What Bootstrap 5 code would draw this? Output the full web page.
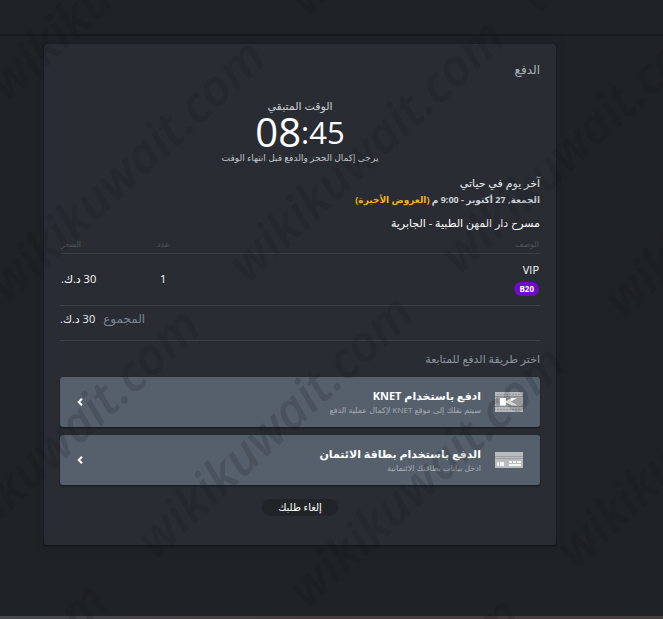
<!DOCTYPE html>
<html lang="ar" dir="rtl">
<head>
<meta charset="utf-8">
<meta name="viewport" content="width=device-width, initial-scale=1">
<title>الدفع</title>
<link href="https://cdn.jsdelivr.net/npm/bootstrap@5.3.0/dist/css/bootstrap.min.css" rel="stylesheet">
<style>
body { background: #1f2226; color: #e9ecef; font-family: "Open Sans", "DejaVu Sans", sans-serif; font-size: 10px; line-height: 16px; }
.topbar { height: 36px; border-bottom: 2px solid #171a21; }
.page-body { padding: 8px 107px 71px 44px; }
.pay-card { background: #292d33; padding: 14px 16px 29px; border-radius: 3px; box-shadow: 0 1px 2px #111417, 0 0 10px #1c202a; }
.page-title { font-size: 12px; line-height: 24px; color: #aeb4ba; font-weight: 400; }
.timer-label { font-size: 11px; line-height: 16px; color: #c9cdd1; }
.clock { line-height: 36px; color: #fff; }
.clock-min { font-size: 40px; }
.clock-sec { font-size: 31px; }
.timer-note { font-size: 9px; line-height: 16px; color: #c0c5ca; }
.show-name { font-size: 11px; line-height: 18px; font-weight: 400; }
.show-date { font-size: 9px; line-height: 16px; color: #ced3d8; }
.show-tag { color: #f3b41b; }
.venue { font-size: 11px; line-height: 18px; margin-top: 6px; color: #fff; }
.order { table-layout: fixed; }
.order th { font-size: 8px; line-height: 16px; height: 21px; color: #50555b; font-weight: 400; vertical-align: bottom; }
.order td { font-size: 11px; line-height: 18px; height: 52px; vertical-align: middle; color: #fff; }
.order tr { border-bottom: 1px solid #3b4046; }
.col-qty { width: 13%; }
.col-price { width: 15%; }
.seat { background: #6d0bc9; font-size: 8px; line-height: 14px; padding: 0 5px; }
.total { height: 35px; font-size: 11px; line-height: 26px; border-bottom: 1px solid #3b4046; }
.total-label { color: #7d8690; font-size: 12px; }
.choose { font-size: 11px; line-height: 36px; color: #8b949c; font-weight: 400; }
.pay-option { background: #56606c; border-radius: 3px; padding: 8px 17px; height: 50px; color: #fff; box-shadow: 0 1px 2px #15181b; }
.pay-option:hover { background: #606a76; color: #fff; }
.pay-text { padding-right: 14px; }
.pay-name { font-size: 11px; line-height: 16px; }
.pay-note { font-size: 8px; line-height: 12px; color: #a4abb3; }
.cancel-row { padding-top: 14px; }
.cancel { background: #202428; color: #fff; font-size: 10px; line-height: 17px; padding: 0 16px; }
.strip { height: 3px; background: linear-gradient(90deg, #46484d, #463c3d 45%, #463d3d); }
.watermark { inset: 0; width: 100%; height: 100%; pointer-events: none; font-family: "Open Sans", sans-serif; font-style: italic; font-size: 50px; font-weight: 600; fill: #111418; fill-opacity: .17; }
</style>
<script src="https://cdn.jsdelivr.net/npm/bootstrap@5.3.0/dist/js/bootstrap.bundle.min.js"></script>
</head>
<body>
<div class="position-relative overflow-hidden">
<header class="topbar"></header>
<main class="page-body">
  <section class="pay-card">
    <h1 class="page-title mb-3">الدفع</h1>
    <div class="text-center mb-2">
      <div class="timer-label">الوقت المتبقي</div>
      <div class="clock d-flex justify-content-center align-items-end" dir="ltr"><span class="clock-min">08</span><span class="clock-sec">:45</span></div>
      <div class="timer-note">يرجى إكمال الحجز والدفع قبل انتهاء الوقت</div>
    </div>
    <h2 class="show-name mb-0">آخر يوم في حياتي</h2>
    <div class="show-date fw-bold">الجمعة, 27 أكتوبر - 9:00 م <span class="show-tag">(العروض الأخيرة)</span></div>
    <div class="venue">مسرح دار المهن الطبية - الجابرية</div>
    <table class="order w-100">
      <thead>
        <tr><th scope="col">الوصف</th><th scope="col" class="col-qty text-center">عدد</th><th scope="col" class="col-price text-start">السعر</th></tr>
      </thead>
      <tbody>
        <tr>
          <td><div>VIP</div><span class="seat badge rounded-pill">B20</span></td>
          <td class="text-center">1</td>
          <td class="text-start">30 د.ك.</td>
        </tr>
      </tbody>
    </table>
    <div class="total d-flex justify-content-end gap-2"><span class="total-label">المجموع</span><span>30 د.ك.</span></div>
    <h3 class="choose mb-0">اختر طريقة الدفع للمتابعة</h3>
    <div class="d-grid gap-2">
      <button type="button" class="pay-option btn border-0 d-flex align-items-center text-end">
        <svg width="28" height="20" viewBox="0 0 28 20" aria-hidden="true"><path fill="#b6b8ba" d="M0 0h28v20H0z"/><path fill="#858b92" d="M0 4h28v1H0zM0 14h28v1H0z"/><path stroke="#92969b" stroke-dasharray="2 1" d="M2 2.500h24M2 17.500h24"/><path fill="#999da1" d="M1 5h27v9H1z"/><path fill="#fff" d="M5 6h6v3l6-3h5l-6 3.500 6 4h-5l-6-3v3H5z"/></svg>
        <span class="pay-text flex-grow-1"><span class="pay-name d-block fw-bold">ادفع باستخدام KNET</span><span class="pay-note d-block">سيتم نقلك إلى موقع KNET لإكمال عملية الدفع</span></span>
        <svg width="6" height="8" viewBox="0 0 6 8" fill="none" stroke="#fff" stroke-width="2" aria-hidden="true"><path d="M5 .7 1.700 4 5 7.300"/></svg>
      </button>
      <button type="button" class="pay-option btn border-0 d-flex align-items-center text-end">
        <svg width="28" height="16" viewBox="0 0 28 16" aria-hidden="true"><path fill="#b9bbbd" d="M0 0h28v16H0z"/><path fill="#9b9fa3" d="M0 4h28v1H0zM0 6h28v1H0z"/><path fill="#f4f4f4" d="M2 10h2v4H2zM5 10h4v4H5zM14 9h3v2h-3zM18 9h3v2h-3zM22 9h4v2h-4zM14 12h12v2H14z"/></svg>
        <span class="pay-text flex-grow-1"><span class="pay-name d-block fw-bold">الدفع باستخدام بطاقة الائتمان</span><span class="pay-note d-block">ادخل بيانات بطاقتك الائتمانية</span></span>
        <svg width="6" height="8" viewBox="0 0 6 8" fill="none" stroke="#fff" stroke-width="2" aria-hidden="true"><path d="M5 .7 1.700 4 5 7.300"/></svg>
      </button>
    </div>
    <div class="cancel-row d-flex justify-content-center"><button type="button" class="cancel btn border-0 rounded-pill">إلغاء طلبك</button></div>
  </section>
</main>
<div class="strip"></div>
<svg class="watermark position-absolute" direction="ltr" aria-hidden="true">
  <text transform="translate(8 103) rotate(-43)">wikikuwait.com</text>
  <text transform="translate(8 304) rotate(-43)">wikikuwait.com</text>
  <text transform="translate(248 284) rotate(-43)">wikikuwait.com</text>
  <text transform="translate(460 275) rotate(-43)">wikikuwait.com</text>
  <text transform="translate(308 18) rotate(-43)">wikikuwait.com</text>
  <text transform="translate(538 15) rotate(-43)">wikikuwait.com</text>
  <text transform="translate(-57 573) rotate(-43)">wikikuwait.com</text>
  <text transform="translate(156 560) rotate(-43)">wikikuwait.com</text>
  <text transform="translate(308 610) rotate(-43)">wikikuwait.com</text>
  <text transform="translate(576 570) rotate(-43)">wikikuwait.com</text>
  <text transform="translate(624 320) rotate(-43)">wikikuwait.com</text>
  <text transform="translate(-150 848) rotate(-43)">wikikuwait.com</text>
  <text transform="translate(262 862) rotate(-43)">wikikuwait.com</text>
</svg>
</div>
</body>
</html>
